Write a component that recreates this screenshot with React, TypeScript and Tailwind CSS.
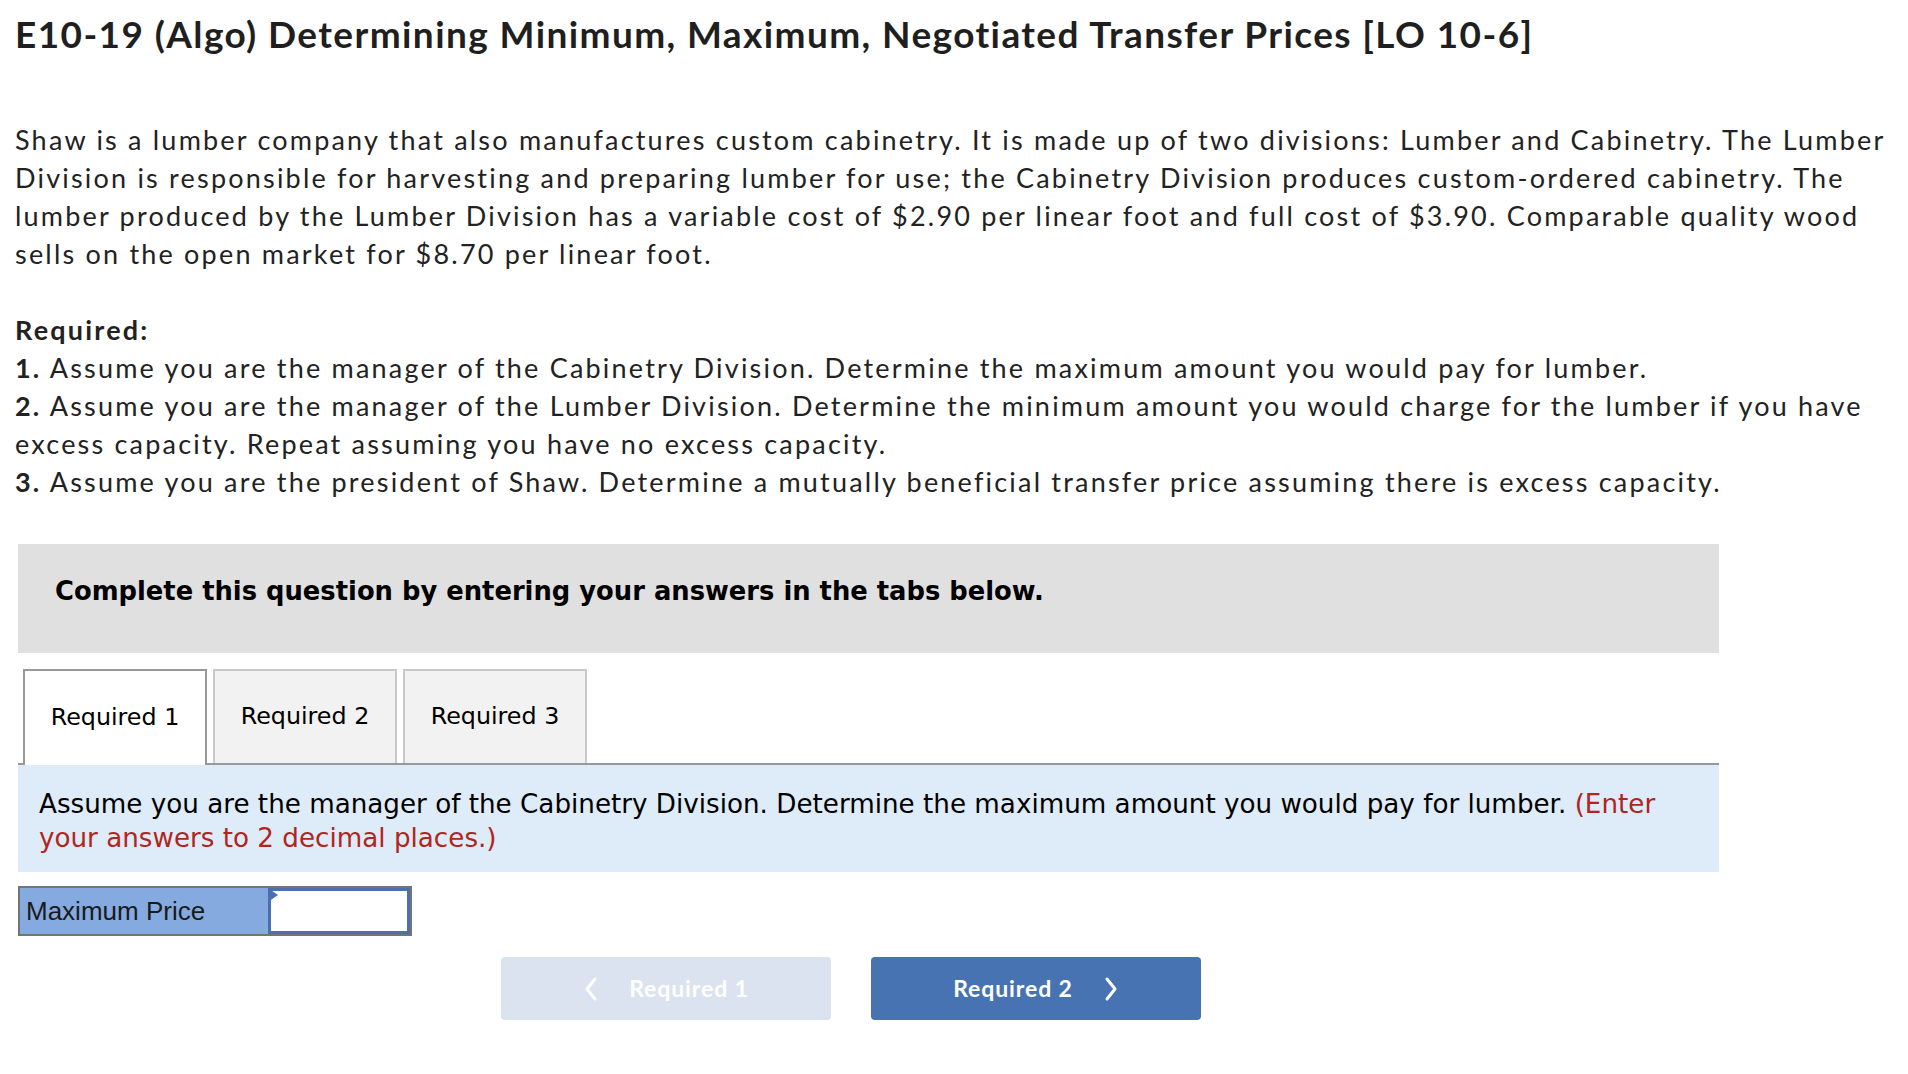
import React from "react";

const prox = { fontFamily: "Lato, 'Open Sans', sans-serif" };
const verd = { fontFamily: "'DejaVu Sans', Verdana, sans-serif" };
const arial = { fontFamily: "'Liberation Sans', Arial, sans-serif" };

function Line({ children }: { children: React.ReactNode }) {
  return <div className="whitespace-nowrap">{children}</div>;
}

export default function App() {
  return (
    <div className="w-[1908px] min-h-[1074px] bg-white pl-[15px] pt-[14px] text-[#222]">
      <h1 style={prox} className="text-[37px] leading-[40px] font-bold tracking-[1.4px] text-[#1f1f1f] whitespace-nowrap">
        E10-19 (Algo) Determining Minimum, Maximum, Negotiated Transfer Prices [LO 10-6]
      </h1>

      <div style={prox} className="mt-[67px] text-[27px] leading-[38px] text-[#222] tracking-[2.2px]">
        <Line>Shaw is a lumber company that also manufactures custom cabinetry. It is made up of two divisions: Lumber and Cabinetry. The Lumber</Line>
        <Line>Division is responsible for harvesting and preparing lumber for use; the Cabinetry Division produces custom-ordered cabinetry. The</Line>
        <Line>lumber produced by the Lumber Division has a variable cost of $2.90 per linear foot and full cost of $3.90. Comparable quality wood</Line>
        <Line>sells on the open market for $8.70 per linear foot.</Line>
        <div className="h-[38px]" />
        <Line><span className="font-bold">Required:</span></Line>
        <Line><span className="font-bold">1.</span> Assume you are the manager of the Cabinetry Division. Determine the maximum amount you would pay for lumber.</Line>
        <Line><span className="font-bold">2.</span> Assume you are the manager of the Lumber Division. Determine the minimum amount you would charge for the lumber if you have</Line>
        <Line>excess capacity. Repeat assuming you have no excess capacity.</Line>
        <Line><span className="font-bold">3.</span> Assume you are the president of Shaw. Determine a mutually beneficial transfer price assuming there is excess capacity.</Line>
      </div>

      <div className="ml-[3px] w-[1701px]">
        <div className="mt-[43px] h-[109px] bg-[#e0e0e0] pl-[37px] pt-[31px]">
          <div style={verd} className="text-[25.8px] leading-[32px] font-bold text-black whitespace-nowrap">
            Complete this question by entering your answers in the tabs below.
          </div>
        </div>

        <div className="mt-[16px] flex items-end gap-[6px] pl-[5px] border-b-2 border-[#999]">
          <div style={verd} className="relative -mb-[2px] flex h-[96px] w-[184px] items-center justify-center border-2 border-b-0 border-[#999] bg-white text-[23.8px] text-black">
            Required 1
          </div>
          <div style={verd} className="flex h-[94px] w-[184px] items-center justify-center border-2 border-b-0 border-[#c9c9c9] bg-[#f2f2f2] text-[23.8px] text-black">
            Required 2
          </div>
          <div style={verd} className="flex h-[94px] w-[184px] items-center justify-center border-2 border-b-0 border-[#c9c9c9] bg-[#f2f2f2] text-[23.8px] text-black">
            Required 3
          </div>
        </div>

        <div style={verd} className="bg-[#deebf8] pl-[21px] pr-[40px] pt-[22px] pb-[17px] text-[26.2px] leading-[34px] text-black">
          <div className="whitespace-nowrap">
            Assume you are the manager of the Cabinetry Division. Determine the maximum amount you would pay for lumber.{" "}
            <span className="text-[#b0261e]">(Enter</span>
          </div>
          <div className="whitespace-nowrap text-[#b0261e]">your answers to 2 decimal places.)</div>
        </div>

        <div className="mt-[14px] flex h-[50px] w-[394px] border-2 border-[#747474]">
          <div style={arial} className="flex w-[248px] items-center bg-[#84aadf] pl-[6px] text-[26px] text-[#1a1a1a]">
            Maximum Price
          </div>
          <div className="relative flex-1 border-[3px] border-[#4a70b0] bg-white">
            <svg className="absolute -left-[3px] -top-[3px]" width="10" height="14" viewBox="0 0 10 14">
              <polygon points="0,0 10,7 0,14" fill="#4a70b0" />
            </svg>
          </div>
        </div>

        <div style={prox} className="mt-[21px] ml-[483px] flex gap-[40px] text-[23px] tracking-[0.9px] font-bold text-white">
          <div className="flex h-[63px] w-[330px] items-center justify-center gap-[30px] rounded-[4px] bg-[#dae3ef]">
            <svg width="16" height="26" viewBox="0 0 16 26" fill="none" stroke="white" strokeWidth="3" strokeLinecap="round" strokeLinejoin="round">
              <polyline points="12,3 4,13 12,23" />
            </svg>
            <span>Required 1</span>
          </div>
          <div className="flex h-[63px] w-[330px] items-center justify-center gap-[30px] rounded-[4px] bg-[#4773b3]">
            <span>Required 2</span>
            <svg width="16" height="26" viewBox="0 0 16 26" fill="none" stroke="white" strokeWidth="3" strokeLinecap="round" strokeLinejoin="round">
              <polyline points="4,3 12,13 4,23" />
            </svg>
          </div>
        </div>
      </div>
    </div>
  );
}
